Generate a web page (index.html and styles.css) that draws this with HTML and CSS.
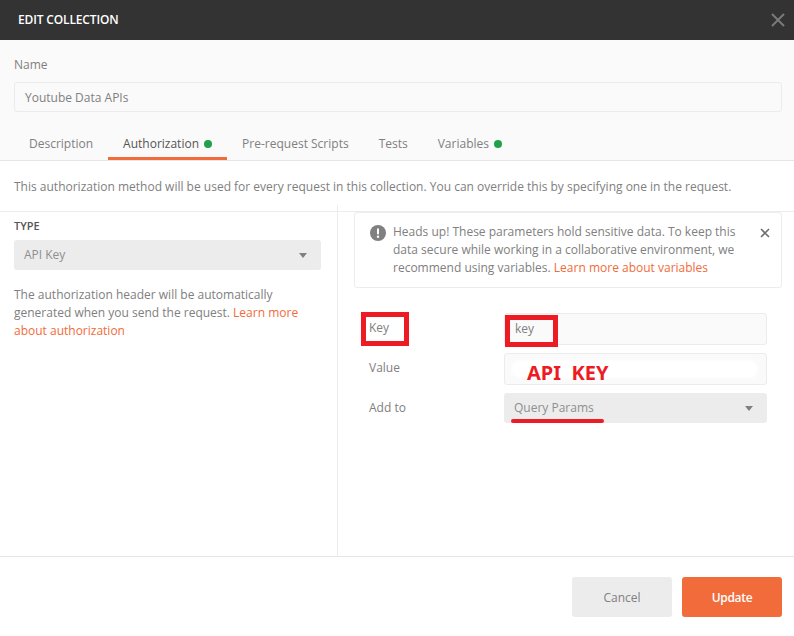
FILE: index.html
```html
<!DOCTYPE html>
<html lang="en">
<head>
  <meta charset="UTF-8" />
  <title>Edit Collection</title>
  <link rel="stylesheet" href="styles.css">
</head>
<body>
  <div class="modal">
    <div class="modal-header">
      <span class="modal-title">EDIT COLLECTION</span>
      <svg class="modal-close" width="14" height="14" viewBox="0 0 14 14"><path d="M1 1l12 12M13 1L1 13" stroke="#7a7a7a" stroke-width="2" fill="none"/></svg>
    </div>

    <div class="top">
      <label class="name-label">Name</label>
      <div class="field name-field">Youtube Data APIs</div>
      <div class="tabs">
        <div class="tab">Description</div>
        <div class="tab active">Authorization <i class="dot"></i></div>
        <div class="tab">Pre-request Scripts</div>
        <div class="tab">Tests</div>
        <div class="tab">Variables <i class="dot"></i></div>
      </div>
    </div>

    <p class="intro">This authorization method will be used for every request in this collection. You can override this by specifying one in the request.</p>

    <div class="auth">
      <div class="auth-left">
        <div class="type-label">TYPE</div>
        <div class="select type-select">API Key <i class="caret"></i></div>
        <p class="help">The authorization header will be automatically generated when you send the request. <a>Learn more about authorization</a></p>
      </div>

      <div class="auth-right">
        <div class="notice">
          <svg class="notice-icon" width="16" height="16" viewBox="0 0 16 16"><circle cx="8" cy="8" r="8" fill="#808080"/><rect x="7" y="3.2" width="2" height="6.4" rx="1" fill="#fff"/><circle cx="8" cy="11.8" r="1.2" fill="#fff"/></svg>
          <div class="notice-text">Heads up! These parameters hold sensitive data. To keep this data secure while working in a collaborative environment, we recommend using variables. <a>Learn more about variables</a></div>
          <svg class="notice-close" width="10" height="10" viewBox="0 0 10 10"><path d="M1 1l8 8M9 1L1 9" stroke="#707070" stroke-width="1.6" fill="none"/></svg>
        </div>

        <div class="params">
          <div class="param-row">
            <div class="param-label"><span class="mark mark-label"></span>Key</div>
            <div class="field param-field"><span class="mark mark-key"></span>key</div>
          </div>
          <div class="param-row">
            <div class="param-label">Value</div>
            <div class="field param-field value-field"><i class="smudge"></i><span class="api-note">API&nbsp; KEY</span></div>
          </div>
          <div class="param-row add-row">
            <div class="param-label">Add to</div>
            <div class="select param-select">Query Params <i class="caret"></i><span class="underline"></span></div>
          </div>
        </div>
      </div>
    </div>

    <div class="modal-footer">
      <button class="btn btn-cancel">Cancel</button>
      <button class="btn btn-update">Update</button>
    </div>
  </div>
</body>
</html>
```

FILE: styles.css
```css
html, body {
  margin: 0;
  padding: 0;
  height: 100%;
  background-color: #fff;
  font-family: "Open Sans", sans-serif;
  font-size: 12px;
  color: #808080;
  overflow: hidden;
}

a {
  color: #f26b3a;
}

.modal {
  display: flex;
  flex-direction: column;
  height: 636px;
}

.modal-header {
  flex: none;
  display: flex;
  align-items: center;
  justify-content: space-between;
  height: 40px;
  padding: 0 9px 0 18px;
  background-color: #333;
}

.modal-title {
  color: #fff;
  font-weight: 600;
  letter-spacing: -0.15px;
  margin-top: -2px;
}

.top {
  flex: none;
  height: 121px;
  box-sizing: border-box;
  padding: 16px 12px 0 14px;
  background-color: #fafafa;
  border-bottom: 1px solid #e6e6e6;
  display: flex;
  flex-direction: column;
}

.name-label {
  line-height: 17px;
  margin-bottom: 9px;
}

.field {
  box-sizing: border-box;
  border: 1px solid #ececec;
  border-radius: 3px;
  background-color: #fafafa;
  padding: 0 10px;
}

.name-field {
  height: 30px;
  line-height: 30px;
}

.tabs {
  display: flex;
  margin-top: 15px;
  height: 33px;
}

.tab {
  padding: 8px 15px 0;
  line-height: 17px;
  white-space: nowrap;
}

.tab.active {
  color: #555;
  height: 33px;
  box-sizing: border-box;
  border-bottom: 3px solid #f26b3a;
}

.dot {
  display: inline-block;
  width: 8px;
  height: 8px;
  border-radius: 50%;
  background-color: #1fa14a;
  margin-left: 2px;
}

.intro {
  flex: none;
  margin: 0;
  height: 50px;
  box-sizing: border-box;
  padding: 17px 14px 0;
  line-height: 17px;
  white-space: nowrap;
}

.auth {
  flex: 1;
  display: flex;
  min-height: 0;
  border-top: 1px solid #ececec;
}

.auth-left {
  position: relative;
  box-sizing: border-box;
  width: 338px;
  padding: 6px 16px 0 14px;
  border-right: 1px solid #ececec;
}

/* divider pokes a little above the horizontal rule */
.auth-left::before {
  content: "";
  position: absolute;
  right: -1px;
  top: -7px;
  width: 1px;
  height: 7px;
  background-color: #ececec;
}

.type-label {
  font-size: 11px;
  font-weight: 600;
  color: #555;
  line-height: 15px;
  margin-bottom: 7px;
}

.select {
  position: relative;
  box-sizing: border-box;
  height: 30px;
  line-height: 30px;
  padding: 0 10px;
  background-color: #ececec;
  border-radius: 3px;
  color: #8f8f8f;
}

.caret {
  position: absolute;
  right: 14px;
  top: 13px;
  width: 0;
  height: 0;
  border-left: 4px solid transparent;
  border-right: 4px solid transparent;
  border-top: 5px solid #808080;
}

.help {
  margin: 16px 0 0;
  line-height: 18px;
}

.auth-right {
  flex: 1;
  padding: 0 12px 0 16px;
}

.notice {
  display: flex;
  align-items: flex-start;
  box-sizing: border-box;
  height: 76px;
  padding: 10px 11px 0 15px;
  border: 1px solid #ececec;
  border-radius: 3px;
}

.notice-icon {
  flex: none;
  margin-top: 2px;
  margin-right: 7px;
}

.notice-text {
  flex: 1;
  line-height: 18px;
}

.notice-close {
  flex: none;
  margin-top: 5px;
  margin-left: 10px;
}

.params {
  margin-top: 25px;
  margin-right: 15px;
  display: flex;
  flex-direction: column;
  gap: 8px;
}

.param-row {
  display: flex;
  align-items: center;
  height: 32px;
}

.add-row {
  height: 30px;
}

.param-label {
  position: relative;
  width: 150px;
  padding: 0 0 4px 15px;
  box-sizing: border-box;
  flex: none;
}

.add-row .param-label {
  padding-bottom: 2px;
}

.param-field {
  position: relative;
  flex: 1;
  height: 32px;
  line-height: 30px;
}

.param-select {
  flex: 1;
}

/* red annotations drawn over the screenshot */
.mark {
  position: absolute;
  box-sizing: border-box;
  border: 5px solid #ed1c24;
}

.mark-label {
  left: 7px;
  top: -7px;
  width: 48px;
  height: 34px;
}

.mark-key {
  left: 0;
  top: 1px;
  width: 53px;
  height: 32px;
}

.smudge {
  position: absolute;
  left: 6px;
  right: 8px;
  top: 6px;
  height: 18px;
  border-radius: 9px;
  background-color: #fff;
  filter: blur(1.5px);
}

.api-note {
  position: absolute;
  left: 22px;
  top: 5px;
  font-family: "Noto Sans", sans-serif;
  font-size: 20px;
  line-height: 27px;
  font-weight: 700;
  color: #ed1c24;
  white-space: nowrap;
}

.underline {
  position: absolute;
  left: 7px;
  top: 26px;
  width: 93px;
  height: 4px;
  border-radius: 2px;
  background-color: #ed1c24;
}

.modal-footer {
  flex: none;
  height: 80px;
  box-sizing: border-box;
  border-top: 1px solid #e6e6e6;
  display: flex;
  justify-content: flex-end;
  gap: 10px;
  padding: 20px 12px 0 0;
}

.btn {
  width: 100px;
  height: 40px;
  border: 0;
  border-radius: 3px;
  font-family: inherit;
  font-size: 12px;
}

.btn-cancel {
  background-color: #ececec;
  color: #808080;
}

.btn-update {
  background-color: #f26b3a;
  color: #fff;
  font-weight: 600;
  letter-spacing: -0.3px;
}
```
